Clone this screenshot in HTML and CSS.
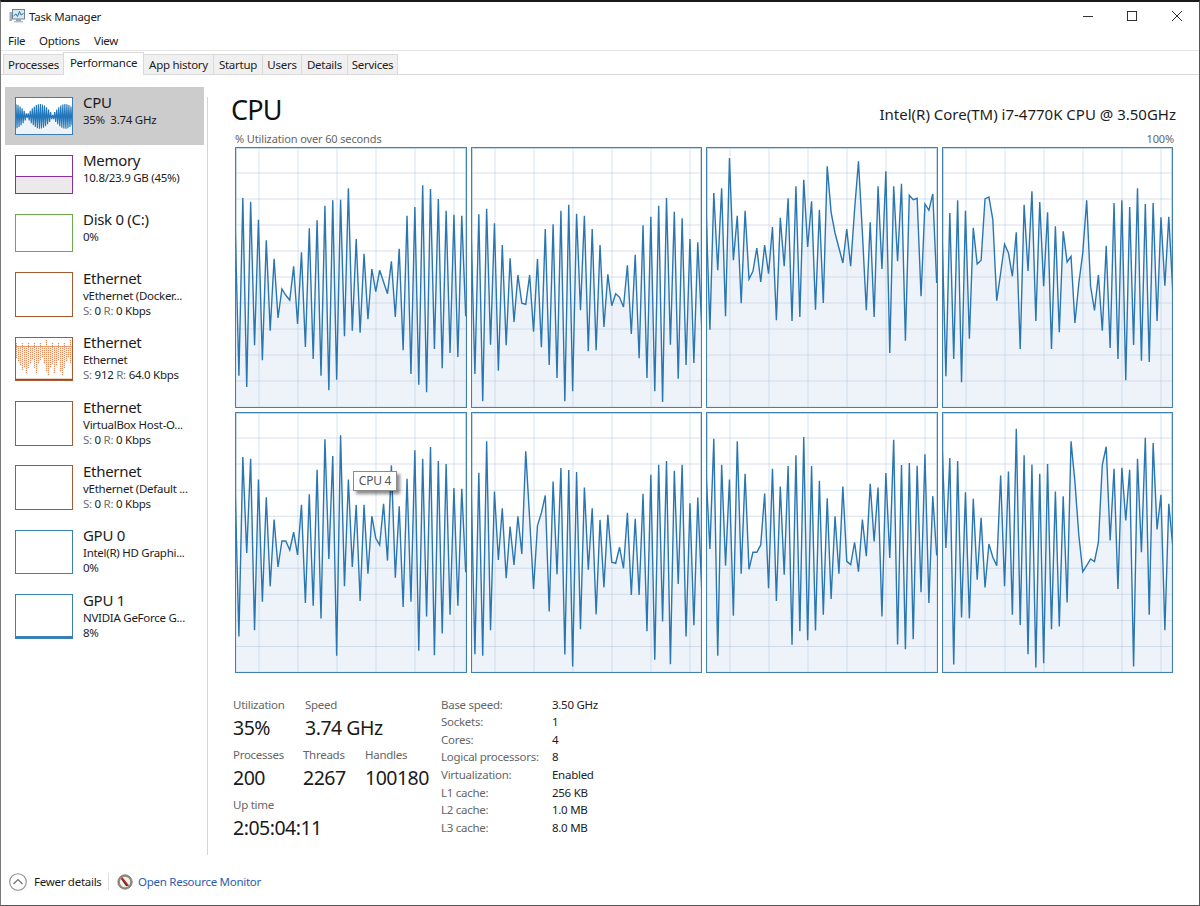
FILE: index.html
```html
<!DOCTYPE html>
<html lang="en">
<head>
<meta charset="utf-8">
<title>Task Manager</title>
<link rel="stylesheet" href="styles.css">
</head>
<body>
<div class="window">
  <header class="titlebar">
    <svg class="app-icon" width="16" height="15" viewBox="0 0 16 15">
      <rect x="0.5" y="3" width="2.5" height="9" fill="#a8adb0"/>
      <rect x="3.5" y="0.5" width="12" height="9.5" fill="#d5e8f4" stroke="#6f8496"/>
      <path d="M4.5 7 L7 5 L8.5 7.5 L10.5 2.5 L12 6 L14.5 4.5" fill="none" stroke="#3d6f94"/>
      <rect x="7" y="10" width="5" height="2" fill="#9aa4ab"/>
      <rect x="5" y="12" width="9" height="1.5" fill="#b9c0c5"/>
    </svg>
    <span class="title-text">Task Manager</span>
    <div class="controls">
      <button class="ctl"><svg width="10" height="10" viewBox="0 0 10 10"><path d="M0 5.5H10" stroke="#333" fill="none"/></svg></button>
      <button class="ctl"><svg width="10" height="10" viewBox="0 0 10 10"><rect x="0.5" y="0.5" width="9" height="9" stroke="#333" fill="none"/></svg></button>
      <button class="ctl"><svg width="10" height="10" viewBox="0 0 10 10"><path d="M0 0L10 10M10 0L0 10" stroke="#333" fill="none"/></svg></button>
    </div>
  </header>
  <nav class="menubar"><span class="m-file">File</span><span class="m-options">Options</span><span>View</span></nav>
  <div class="tabs">
    <span class="tab t-proc">Processes</span>
    <span class="tab active">Performance</span>
    <span class="tab t-app">App history</span>
    <span class="tab t-start">Startup</span>
    <span class="tab t-users">Users</span>
    <span class="tab t-det">Details</span>
    <span class="tab t-serv">Services</span>
  </div>
  <div class="body">
    <aside class="sidebar">
      <div class="item short selected">
        <div class="thumb cpu"><svg id="thumb-cpu" class="fill-svg"></svg></div>
        <div class="item-text"><div class="name">CPU</div><div class="sub">35%&nbsp; 3.74 GHz</div></div>
      </div>
      <div class="item short">
        <div class="thumb mem"><div class="mem-free"></div><div class="mem-used"></div></div>
        <div class="item-text"><div class="name">Memory</div><div class="sub">10.8/23.9 GB (45%)</div></div>
      </div>
      <div class="item short">
        <div class="thumb disk"></div>
        <div class="item-text"><div class="name">Disk 0 (C:)</div><div class="sub">0%</div></div>
      </div>
      <div class="item">
        <div class="thumb eth"></div>
        <div class="item-text"><div class="name">Ethernet</div><div class="sub">vEthernet (Docker...</div><div class="sub"><span class="dim">S:</span> 0 <span class="dim">R:</span> 0 Kbps</div></div>
      </div>
      <div class="item">
        <div class="thumb eth"><svg id="thumb-eth" class="fill-svg"></svg></div>
        <div class="item-text"><div class="name">Ethernet</div><div class="sub">Ethernet</div><div class="sub"><span class="dim">S:</span> 912 <span class="dim">R:</span> 64.0 Kbps</div></div>
      </div>
      <div class="item">
        <div class="thumb eth"></div>
        <div class="item-text"><div class="name">Ethernet</div><div class="sub">VirtualBox Host-O...</div><div class="sub"><span class="dim">S:</span> 0 <span class="dim">R:</span> 0 Kbps</div></div>
      </div>
      <div class="item">
        <div class="thumb eth"></div>
        <div class="item-text"><div class="name">Ethernet</div><div class="sub">vEthernet (Default ...</div><div class="sub"><span class="dim">S:</span> 0 <span class="dim">R:</span> 0 Kbps</div></div>
      </div>
      <div class="item">
        <div class="thumb gpu"></div>
        <div class="item-text"><div class="name">GPU 0</div><div class="sub">Intel(R) HD Graphi...</div><div class="sub">0%</div></div>
      </div>
      <div class="item">
        <div class="thumb gpu"><div class="gpu-band"></div></div>
        <div class="item-text"><div class="name">GPU 1</div><div class="sub">NVIDIA GeForce G...</div><div class="sub">8%</div></div>
      </div>
    </aside>
    <div class="divider"></div>
    <main class="main">
      <div class="head-row"><h1>CPU</h1><div class="model">Intel(R) Core(TM) i7-4770K CPU @ 3.50GHz</div></div>
      <div class="axis-row"><span>% Utilization over 60 seconds</span><span>100%</span></div>
      <div class="charts" id="charts"></div>
      <div class="details">
        <div class="stats">
          <div class="stat-row">
            <div class="stat w-util"><div class="label">Utilization</div><div class="value">35%</div></div>
            <div class="stat"><div class="label">Speed</div><div class="value">3.74 GHz</div></div>
          </div>
          <div class="stat-row">
            <div class="stat w-proc"><div class="label">Processes</div><div class="value">200</div></div>
            <div class="stat w-thr"><div class="label">Threads</div><div class="value">2267</div></div>
            <div class="stat"><div class="label">Handles</div><div class="value">100180</div></div>
          </div>
          <div class="stat-row">
            <div class="stat"><div class="label">Up time</div><div class="value">2:05:04:11</div></div>
          </div>
        </div>
        <dl class="specs">
          <dt>Base speed:</dt><dd>3.50 GHz</dd>
          <dt>Sockets:</dt><dd>1</dd>
          <dt>Cores:</dt><dd>4</dd>
          <dt>Logical processors:</dt><dd>8</dd>
          <dt>Virtualization:</dt><dd>Enabled</dd>
          <dt>L1 cache:</dt><dd>256 KB</dd>
          <dt>L2 cache:</dt><dd>1.0 MB</dd>
          <dt>L3 cache:</dt><dd>8.0 MB</dd>
        </dl>
      </div>
    </main>
  </div>
  <footer class="footer">
    <svg class="chev" width="18" height="18" viewBox="0 0 18 18">
      <circle cx="9" cy="9" r="8.3" fill="#fff" stroke="#8c8c8c" stroke-width="1.1"/>
      <path d="M4.5 11 L9 6.5 L13.5 11" fill="none" stroke="#6e6e6e" stroke-width="1.2"/>
    </svg>
    <span class="fewer">Fewer details</span>
    <span class="foot-sep"></span>
    <svg class="res-icon" width="16" height="16" viewBox="0 0 16 16">
      <circle cx="8" cy="8" r="7.2" fill="#8d8d7f" stroke="#77776c" stroke-width="0.8"/>
      <circle cx="8" cy="8" r="5.2" fill="#f6f2e8"/>
      <path d="M5 3.5 L11.5 11.5 L9.2 12.2 L4 5 Z" fill="#3a2a2a"/>
      <path d="M5 4 L11.2 11.8" stroke="#c8222a" stroke-width="1.6"/>
    </svg>
    <span class="link">Open Resource Monitor</span>
  </footer>
</div>
<script src="script.js"></script>
</body>
</html>
```
FILE: styles.css
```css
* { box-sizing: border-box; }
html, body { margin: 0; padding: 0; height: 906px; overflow: hidden; background: #fff; }
body { font-family: "Noto Sans", "Liberation Sans", sans-serif; font-size: 11.5px; color: #1c1c1c; letter-spacing: -0.27px; }

.window {
  height: 906px;
  display: flex;
  flex-direction: column;
  border-top: 2px solid #1a1a1a;
  border-left: 1px solid #7a7a7a;
  border-right: 1px solid #555;
  border-bottom: 1px solid #555;
}

.titlebar { height: 28px; display: flex; align-items: center; padding-left: 8px; flex: none; }
.app-icon { margin-right: 4px; }
.title-text { flex: 1; }
.controls { display: flex; align-self: stretch; }
.ctl { width: 44.5px; padding: 0; border: 0; background: none; display: flex; align-items: center; justify-content: center; }

.menubar { height: 21px; flex: none; display: flex; align-items: center; padding-left: 7px; border-bottom: 1px solid #e6e6e6; }
.m-file { width: 31px; }
.m-options { width: 55px; }

.tabs { height: 24px; flex: none; display: flex; align-items: flex-end; padding-left: 2px; border-bottom: 1px solid #d9d9d9; }
.tab { height: 20px; line-height: 19px; background: #f0f0f0; border: 1px solid #d9d9d9; border-bottom: 0; margin-right: -1px; text-align: center; flex: none; }
.tab.active { height: 23px; line-height: 19px; background: #fff; margin-bottom: -1px; width: 81px; position: relative; }
.t-proc { width: 61px; }
.t-app { width: 71px; }
.t-start { width: 50px; }
.t-users { width: 40px; }
.t-det { width: 47px; }
.t-serv { width: 51px; }

.body { flex: 1; display: flex; min-height: 0; }

.sidebar { width: 206px; flex: none; padding: 11.5px 0 0 4px; }
.item { height: 64.4px; display: flex; width: 199px; padding: 10px 0 0 10px; }
.item.short { height: 58.6px; }
.item.selected { background: #cccccc; }
.thumb { width: 58px; height: 44.5px; border: 1px solid #999; position: relative; background: #fff; flex: none; overflow: hidden; }
.short .thumb { height: 38.5px; }
.thumb.cpu { border: 1.5px solid #3a80b4; }
.thumb.mem { border: 1px solid #8b2ea3; display: flex; flex-direction: column; }
.thumb.disk { border: 1px solid #6ea84f; }
.thumb.eth { border: 1px solid #a8582c; }
.thumb.gpu { border: 1px solid #3a80b4; }
.mem-free { height: 56%; border-bottom: 1px solid #8b2ea3; }
.mem-used { flex: 1; background: #ebe9eb; }
.gpu-band { position: absolute; left: 0; right: 0; bottom: 0; height: 2px; background: #3a80b4; }
.fill-svg { display: block; width: 100%; height: 100%; }
.item-text { margin: -3.5px 0 0 10px; white-space: nowrap; }
.short .item-text { margin-top: -4px; }
.name { font-size: 15px; line-height: 19px; letter-spacing: -0.3px; }
.sub { line-height: 15px; }
.short .sub { line-height: 15.5px; }
.dim { color: #707070; }

.divider { width: 1px; background: #d4d4d4; margin: 22px 0 6px; flex: none; }

.main { flex: 1; padding: 0 23px 0 24px; min-width: 0; }
.head-row { display: flex; justify-content: space-between; align-items: baseline; margin-top: 17px; }
h1 { margin: 0 0 0 -1px; font-weight: 400; font-size: 27px; line-height: 36px; letter-spacing: -0.8px; color: #111; }
.model { font-size: 15px; color: #1c1c1c; letter-spacing: 0; }
.axis-row { display: flex; justify-content: space-between; height: 16px; margin: 3px 2px 0 3px; font-size: 11px; line-height: 16px; color: #666; letter-spacing: -0.13px; }
.charts { margin: 0 3px 0 3px; display: grid; grid-template-columns: repeat(4, 1fr); grid-template-rows: 260.5px 261px; gap: 4.5px 4px; }
.chart { border: 1px solid #3f82b2; box-shadow: inset 0 0 0 1px rgba(90,145,185,.35); position: relative; background: #fff; min-width: 0; }
.chart svg { display: block; width: 100%; height: 100%; }
.tooltip { position: absolute; left: 117px; top: 58px; width: 44px; height: 20px; background: #fff; border: 1px solid #8a8a8a; box-shadow: 3px 3px 3px rgba(0,0,0,.45); font-size: 12px; line-height: 18px; text-align: center; color: #555; }

.details { display: flex; margin-top: 24px; padding-left: 1px; }
.stats { width: 208px; flex: none; }
.stat-row { display: flex; height: 49.8px; }
.w-util { width: 72px; }
.w-proc { width: 70px; }
.w-thr { width: 62px; }
.label { height: 16px; line-height: 16px; color: #666; }
.value { font-size: 19.5px; line-height: 30px; letter-spacing: -0.5px; color: #1a1a1a; white-space: nowrap; }
.specs { margin: -1px 0 0; display: grid; grid-template-columns: 111px auto; grid-auto-rows: 17.55px; align-items: center; align-self: flex-start; }
.specs dt { color: #666; line-height: 16px; }
.specs dd { margin: 0; line-height: 16px; }

.footer { height: 44px; flex: none; display: flex; align-items: center; padding: 0 0 3px 8px; }
.chev { margin-right: 7px; }
.fewer { width: 74px; }
.foot-sep { width: 1px; height: 17px; background: #ddd; margin-right: 8px; }
.res-icon { margin-right: 5px; }
.link { color: #2a5cb0; }
```
FILE: script.js
```js
// Per-core history: one sample a second for 60 seconds, as y positions at 3x scale from the frame origin.
var CORES = [
 {o:52,y:[265,738,205,772,216,647,270,692,332,603,387,565,478,497,512,410,583,368,652,296,688,272,738,228,782,212,750,210,620,176,603,328,609,372,569,418,486,422,457,492,395,562,357,662,258,733,232,765,167,788,178,658,208,716,243,670,255,682,258,560]},
 {o:22,y:[260,703,224,785,207,615,251,693,316,617,356,547,406,491,494,406,576,358,623,268,676,254,715,213,785,195,755,222,512,228,635,268,632,316,562,404,498,462,473,502,377,583,345,656,257,715,231,755,198,787,175,615,216,717,236,676,298,670,308,560]},
 {o:22,y:[200,570,160,392,146,530,55,362,228,491,213,418,395,325,427,316,402,262,542,234,380,176,544,140,532,120,322,185,510,210,490,80,218,280,325,370,268,380,210,65,280,512,248,532,140,388,95,640,140,365,132,603,167,180,176,470,193,212,163,430]},
 {o:22,y:[275,710,220,658,182,728,213,597,264,373,362,178,172,240,483,400,314,340,410,278,628,195,394,155,544,187,440,218,628,260,578,275,367,350,550,430,340,182,440,512,406,573,318,625,190,658,182,722,202,616,146,663,193,667,190,544,233,438,231,450]},
 {o:20,y:[230,692,155,442,160,673,222,588,275,542,342,484,406,406,433,380,448,298,592,266,600,193,638,102,460,152,750,90,542,222,484,298,586,298,504,332,398,418,295,465,180,516,302,604,220,588,135,735,160,632,125,748,167,683,176,627,248,600,250,500]},
 {o:20,y:[225,745,202,750,108,673,258,463,308,518,363,478,332,445,138,340,550,360,322,270,617,228,506,188,746,194,782,200,670,246,492,308,626,343,545,328,470,473,425,488,322,568,340,568,265,676,208,762,178,647,167,775,196,535,178,692,293,658,276,550]},
 {o:20,y:[200,430,100,750,178,480,222,630,108,504,205,491,440,440,418,264,548,190,586,243,507,182,717,150,676,95,703,182,674,226,627,278,580,332,504,243,467,477,410,498,342,452,235,408,246,632,203,457,103,716,179,730,173,700,181,560,147,592,272,450]},
 {o:20,y:[110,427,158,776,167,635,260,638,280,522,337,545,415,455,480,210,542,198,627,70,658,150,745,177,785,205,772,176,670,258,662,272,590,108,230,390,498,480,460,468,410,178,124,405,190,550,187,345,193,782,160,440,97,627,113,372,268,673,295,420]}
];
var W = 231.5, H = 260.5, STEP = 3.91, NS = "http://www.w3.org/2000/svg";

function el(name, attrs, parent) {
  var e = document.createElementNS(NS, name);
  for (var k in attrs) e.setAttribute(k, attrs[k]);
  parent.appendChild(e);
  return e;
}

var host = document.getElementById("charts");
CORES.forEach(function (core, idx) {
  var box = document.createElement("div");
  box.className = "chart";
  var svg = el("svg", { viewBox: "1 1 " + (W - 2) + " " + (H - 2), preserveAspectRatio: "none" }, box);
  var pts = core.y.map(function (y, i) { return (i * STEP).toFixed(2) + "," + ((y - core.o) / 3).toFixed(1); });
  el("polygon", { points: "0," + H + " " + pts.join(" ") + " " + (59 * STEP) + "," + H, fill: "#e8eff8", "fill-opacity": 0.75 }, svg);
  for (var v = 1; v <= 6; v++) el("line", { x1: 39 * v - 15, x2: 39 * v - 15, y1: 0, y2: H, stroke: "#b4cde2", "stroke-opacity": 0.55, "stroke-width": 1 }, svg);
  for (var h = 1; h <= 9; h++) el("line", { x1: 0, x2: W, y1: 26 * h, y2: 26 * h, stroke: "#b4c6dc", "stroke-opacity": 0.5, "stroke-width": 1 }, svg);
  el("polyline", { points: pts.join(" "), fill: "none", stroke: "#2a76b1", "stroke-width": 1.4, "stroke-linejoin": "miter" }, svg);
  if (idx === 4) {
    var tip = document.createElement("div");
    tip.className = "tooltip";
    tip.textContent = "CPU 4";
    box.appendChild(tip);
  }
  host.appendChild(box);
});

// CPU thumbnail: overall history in miniature.
(function () {
  var svg = document.getElementById("thumb-cpu");
  svg.setAttribute("viewBox", "0 0 55 35.5");
  svg.setAttribute("preserveAspectRatio", "none");
  var pts = [];
  for (var i = 0; i <= 55; i++) {
    var amp = 1.5 + 10.5 * Math.abs(Math.sin(Math.PI * (i - 11) / 25));
    pts.push(i + "," + (17.8 + (i % 2 ? amp : -amp)).toFixed(1));
  }
  el("rect", { x: 0, y: 18, width: 55, height: 18, fill: "#eef3f9" }, svg);
  el("polyline", { points: pts.join(" "), fill: "none", stroke: "#2277ba", "stroke-width": 1.1 }, svg);
})();

// Active network adapter thumbnail.
(function () {
  var svg = document.getElementById("thumb-eth");
  svg.setAttribute("viewBox", "0 0 56 42.5");
  svg.setAttribute("preserveAspectRatio", "none");
  var ends = [20, 24, 28, 32, 30, 36, 30, 26, 22, 30, 36, 26, 22, 20, 26, 34, 38, 30, 26, 36, 28, 22, 34, 38, 30, 24, 20, 26, 22];
  el("line", { x1: 0, x2: 56, y1: 8.5, y2: 8.5, stroke: "#d9a98a", "stroke-width": 1 }, svg);
  ends.forEach(function (e, i) {
    var top = i === 15 || i === 27 ? 2 : i % 3 === 0 ? 5 : 8;
    el("line", { x1: i * 2 + 0.5, x2: i * 2 + 0.5, y1: top, y2: e, stroke: "#e58f5c", "stroke-width": 1.3, "stroke-dasharray": "1.2 0.8" }, svg);
  });
  el("line", { x1: 0, x2: 56, y1: 41.5, y2: 41.5, stroke: "#9c4e22", "stroke-width": 1.5 }, svg);
})();
```
